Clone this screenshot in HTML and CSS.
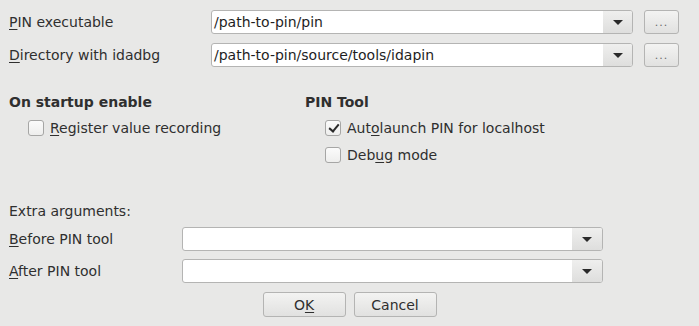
FILE: index.html
```html
<!DOCTYPE html>
<html lang="en">
<head>
  <meta charset="UTF-8">
  <title>PIN debugger options</title>
  <link rel="stylesheet" href="styles.css">
</head>
<body>
  <div class="dialog">
    <div class="path-grid">
      <label class="field-label"><u>P</u>IN executable</label>
      <div class="combo">
        <div class="combo-value">/path-to-pin/pin</div>
        <div class="combo-arrow"><span class="arrow"></span></div>
      </div>
      <button class="btn browse">...</button>

      <label class="field-label"><u>D</u>irectory with idadbg</label>
      <div class="combo">
        <div class="combo-value">/path-to-pin/source/tools/idapin</div>
        <div class="combo-arrow"><span class="arrow"></span></div>
      </div>
      <button class="btn browse">...</button>
    </div>

    <div class="groups">
      <div class="group">
        <div class="group-title">On startup enable</div>
        <label class="check-row"><span class="checkbox"></span><span><u>R</u>egister value recording</span></label>
      </div>
      <div class="group">
        <div class="group-title">PIN Tool</div>
        <label class="check-row"><span class="checkbox checked"></span><span>Aut<u>o</u>launch PIN for localhost</span></label>
        <label class="check-row"><span class="checkbox"></span><span>Deb<u>u</u>g mode</span></label>
      </div>
    </div>

    <div class="extra">
      <div class="extra-title">Extra arguments:</div>
      <div class="extra-grid">
        <label class="field-label"><u>B</u>efore PIN tool</label>
        <div class="combo">
          <div class="combo-value"></div>
          <div class="combo-arrow"><span class="arrow"></span></div>
        </div>
        <label class="field-label"><u>A</u>fter PIN tool</label>
        <div class="combo">
          <div class="combo-value"></div>
          <div class="combo-arrow"><span class="arrow"></span></div>
        </div>
      </div>
    </div>

    <div class="buttons">
      <button class="btn action">O<u>K</u></button>
      <button class="btn action">Cancel</button>
    </div>
  </div>
</body>
</html>
```

FILE: styles.css
```css
body {
  margin: 0;
  background: #e8e8e7;
  font-family: 'DejaVu Sans', 'Liberation Sans', sans-serif;
  font-size: 14px;
  color: #2f2f2f;
  width: 699px;
  height: 326px;
  overflow: hidden;
}
u { text-decoration-thickness: 1px; text-underline-offset: 2px; }
.dialog {
  padding: 10px 9px 0 9px;
}
.path-grid {
  display: grid;
  grid-template-columns: 191px 422px 35px;
  grid-auto-rows: 24px;
  column-gap: 11px;
  row-gap: 9px;
  align-items: center;
}
.field-label { line-height: 16px; }
.combo {
  display: flex;
  height: 24px;
  box-sizing: border-box;
  border: 1px solid #b4b4b3;
  border-radius: 3px;
  background: #fff;
  overflow: hidden;
}
.combo-value {
  flex: 1;
  padding-left: 2px;
  line-height: 22px;
  color: #1e1e1e;
  white-space: nowrap;
}
.combo-arrow {
  width: 29px;
  background: linear-gradient(#efefee, #dededd);
  display: flex;
  align-items: center;
  justify-content: center;
}
.arrow {
  width: 0; height: 0;
  border-left: 5px solid transparent;
  border-right: 5px solid transparent;
  border-top: 5px solid #2a2a2a;
  margin-top: 1px;
}
.btn {
  font-family: 'DejaVu Sans', 'Liberation Sans', sans-serif;
  font-size: 14px;
  color: #2f2f2f;
  border: 1px solid #b4b4b3;
  border-radius: 3px;
  background: linear-gradient(#f3f3f2, #e1e1e0);
  padding: 0;
  box-sizing: border-box;
}
.browse {
  height: 24px;
  color: #6a6a6a;
  font-size: 11px;
  letter-spacing: 1px;
}
.groups {
  display: grid;
  grid-template-columns: 296px 296px;
  margin-top: 27px;
}
.group-title {
  font-weight: bold;
  line-height: 16px;
  margin-bottom: 10px;
}
.check-row {
  display: flex;
  align-items: center;
  gap: 6px;
  line-height: 16px;
  margin-bottom: 11px;
  padding-left: 19px;
}
.group + .group .check-row { padding-left: 20px; }
.checkbox {
  width: 16px; height: 16px;
  box-sizing: border-box;
  border: 1px solid #a6a6a5;
  border-radius: 3px;
  background: linear-gradient(#fbfbfb, #eeeeed);
  position: relative;
  flex-shrink: 0;
}
.checkbox.checked::after {
  content: '';
  position: absolute;
  left: 5px; top: 1px;
  width: 4px; height: 8px;
  border-right: 2.5px solid #2a2a2a;
  border-bottom: 2.5px solid #2a2a2a;
  transform: rotate(40deg);
}
.extra { margin-top: 29px; }
.extra-title { line-height: 16px; }
.extra-grid {
  display: grid;
  grid-template-columns: 173px 421px;
  grid-auto-rows: 24px;
  row-gap: 8px;
  align-items: center;
  margin-top: 8px;
}
.extra-grid .combo-arrow { width: 30px; }
.buttons {
  display: flex;
  justify-content: center;
  gap: 8px;
  margin-top: 9px;
}
.action {
  width: 83px;
  height: 25px;
}
```
